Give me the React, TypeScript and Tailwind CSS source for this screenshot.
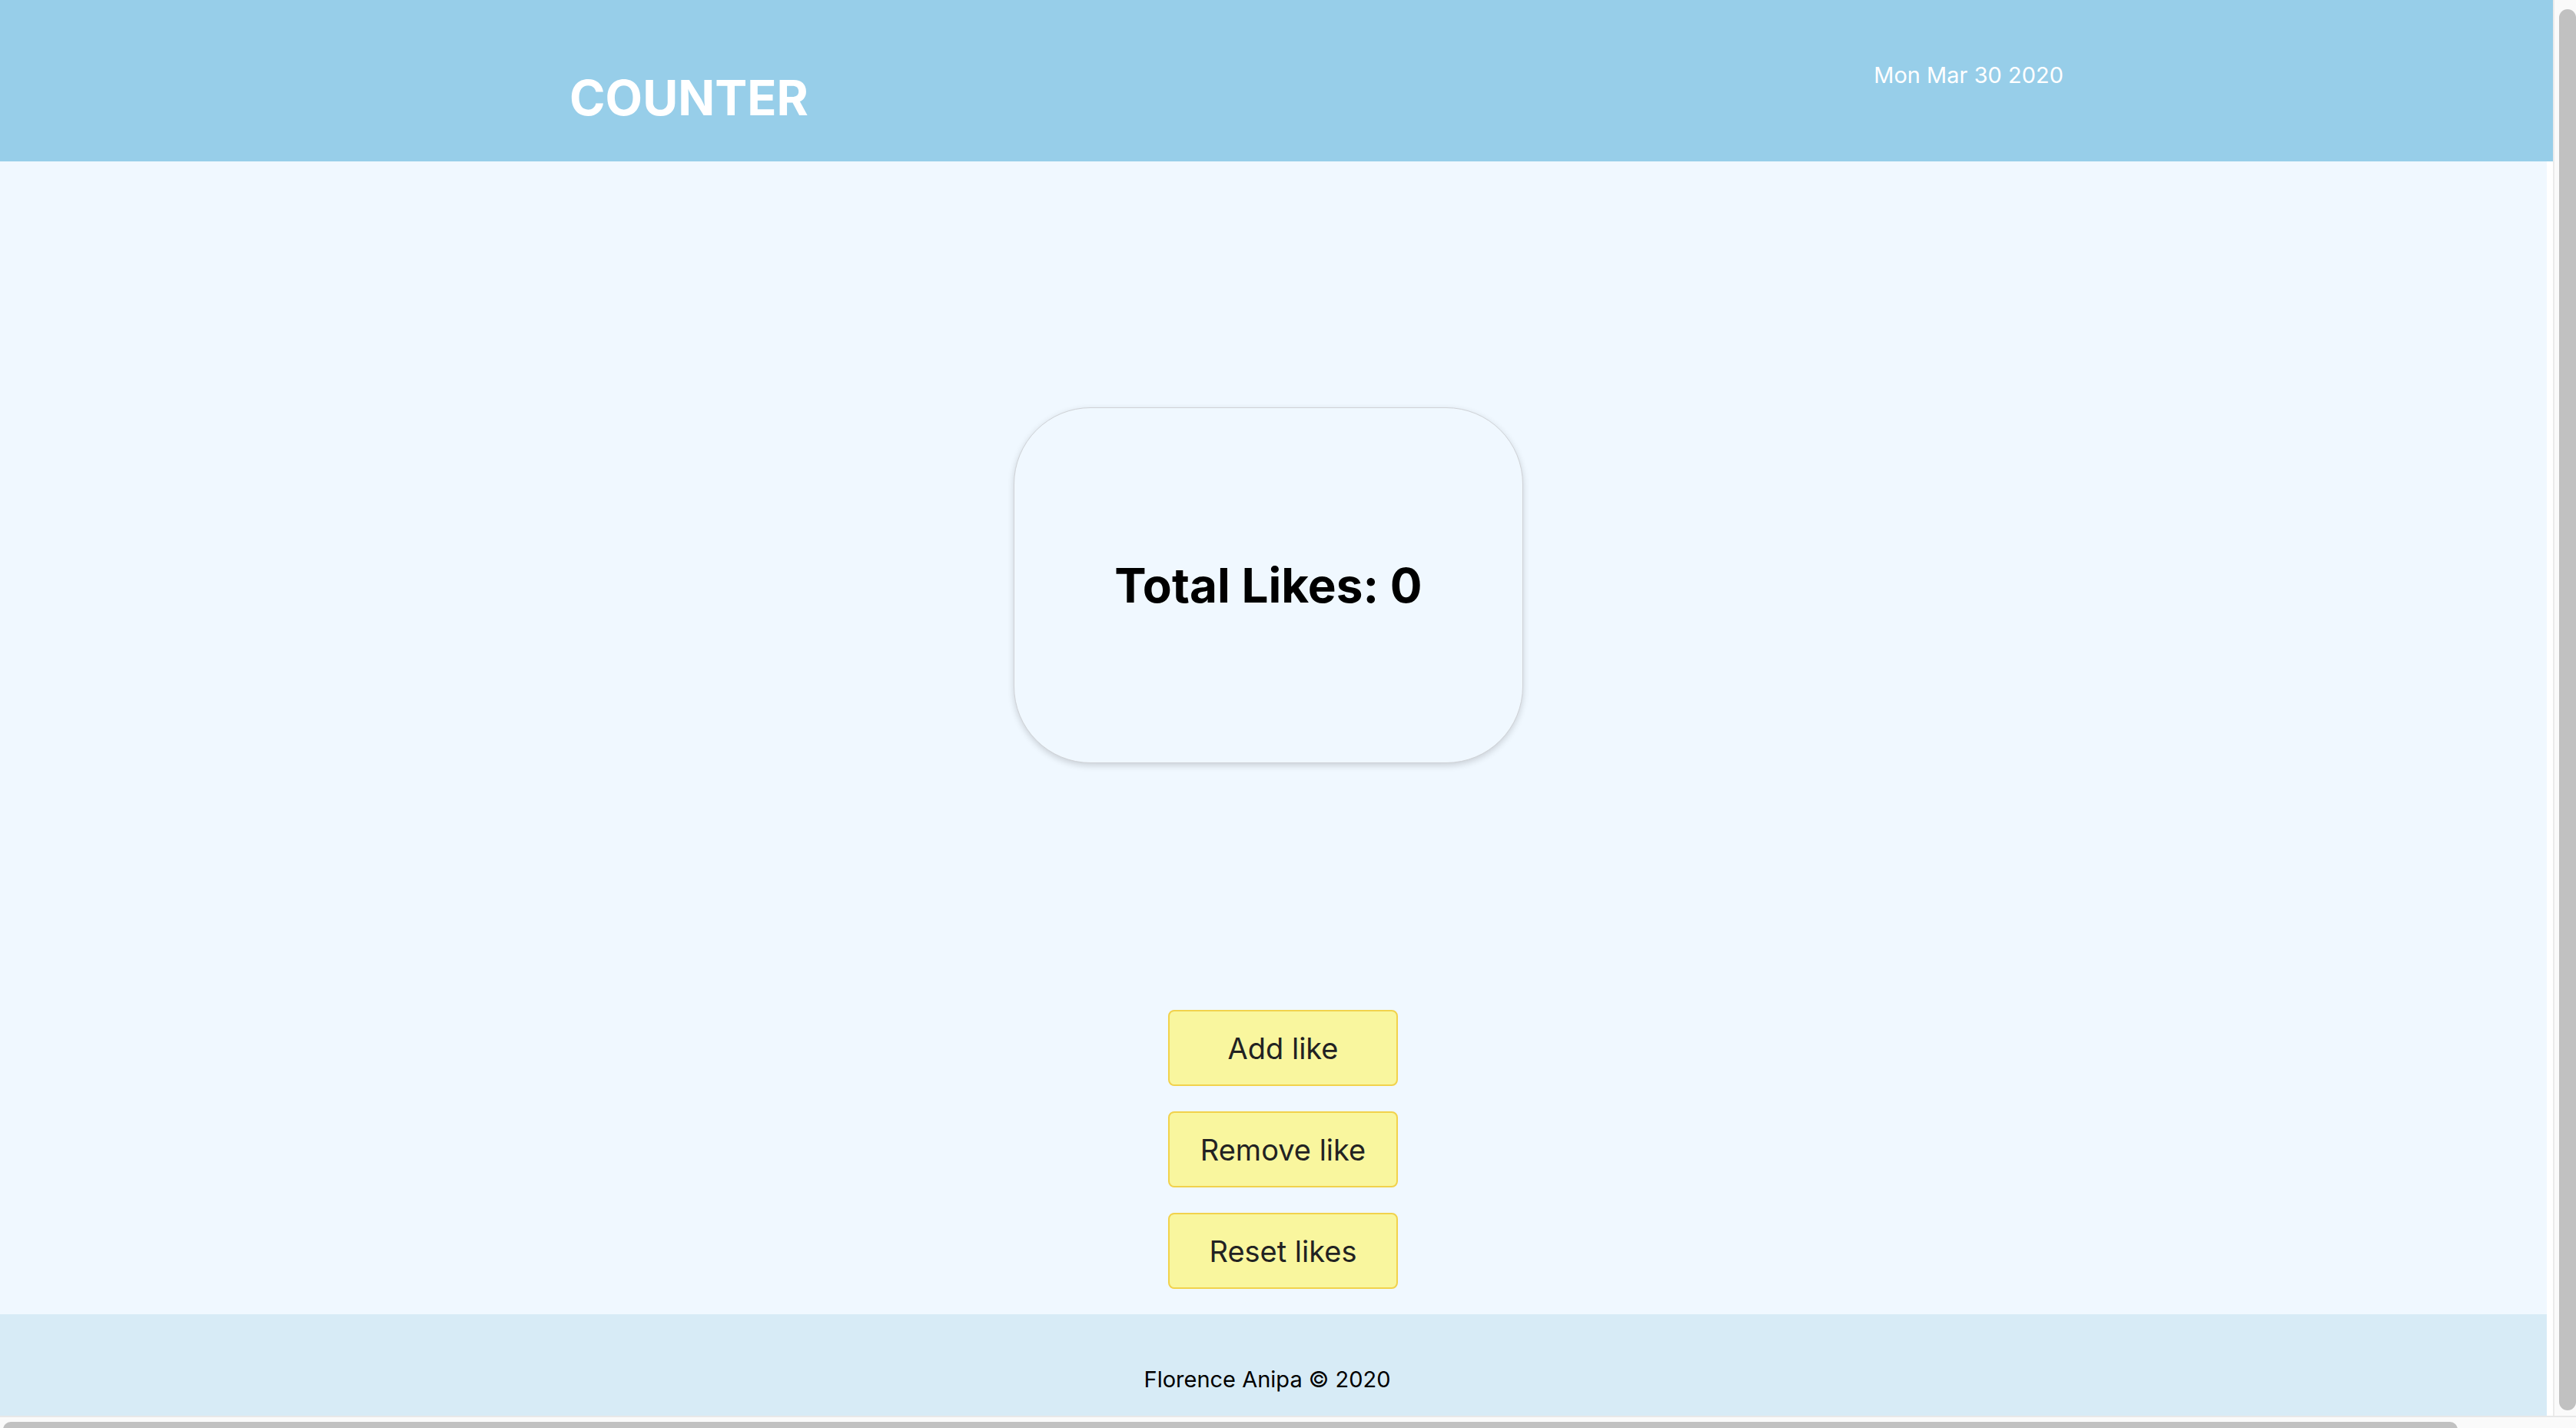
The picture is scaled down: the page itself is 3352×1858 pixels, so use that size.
import { useState } from 'react';

const font = { fontFamily: 'Inter, "Noto Sans", sans-serif' };

function LikeButton({ label, onClick }: { label: string; onClick: () => void }) {
  return (
    <button
      onClick={onClick}
      className="flex h-[99px] w-[299px] items-center justify-center rounded-[8px] border-2 border-[#f1d24c] bg-[#f9f69e] text-[38px] leading-none text-[#222222]"
    >
      {label}
    </button>
  );
}

export default function App() {
  const [likes, setLikes] = useState(0);

  return (
    <div className="flex h-screen w-screen flex-col overflow-hidden bg-[#fafafa]" style={font}>
      <div className="flex h-[1842px] shrink-0">
        <div className="flex w-[3322px] flex-col bg-white">
          <header className="flex h-[210px] w-full shrink-0 items-start justify-between bg-[#97cee9] pl-[741px] pr-[637px] text-white">
            <h1 className="mt-[95px] text-[63px] font-bold leading-[64px]">COUNTER</h1>
            <p className="mt-[82px] text-[29px] leading-[32px]">Mon Mar 30 2020</p>
          </header>

          <main className="flex w-[3314px] flex-1 flex-col items-center bg-[#f0f8ff]">
            <div className="mr-[13px] mt-[320px] flex h-[463px] w-[663px] shrink-0 items-center justify-center rounded-[100px] border border-[#cfd2d6] bg-[#f0f8ff] shadow-[0_3px_8px_rgba(0,0,0,0.16)]">
              <h2 className="text-[62px] font-bold leading-none text-black">Total Likes: {likes}</h2>
            </div>

            <div className="ml-[25px] mt-[321px] flex flex-col gap-[33px]">
              <LikeButton label="Add like" onClick={() => setLikes(likes + 1)} />
              <LikeButton label="Remove like" onClick={() => setLikes(Math.max(0, likes - 1))} />
              <LikeButton label="Reset likes" onClick={() => setLikes(0)} />
            </div>
          </main>

          <footer className="flex h-[132px] w-[3314px] shrink-0 justify-center bg-[#d7ebf6] pr-[16px] pt-[69px]">
            <p className="text-[29px] leading-[32px] text-black">Florence Anipa © 2020</p>
          </footer>
        </div>

        {/* vertical scrollbar */}
        <div className="flex w-[30px] border-l-2 border-[#ebebeb] bg-[#fafafa] pl-[6px] pt-[12px] pb-[7px]">
          <div className="w-[16px] flex-1 rounded-full bg-[#c1c1c1]" />
        </div>
      </div>

      {/* horizontal scrollbar */}
      <div className="flex h-[16px] shrink-0 overflow-hidden border-t-2 border-[#e8e8e8] pl-[4px] pt-[6px]">
        <div className="h-[20px] w-[3194px] shrink-0 rounded-full bg-[#c1c1c1]" />
      </div>
    </div>
  );
}
